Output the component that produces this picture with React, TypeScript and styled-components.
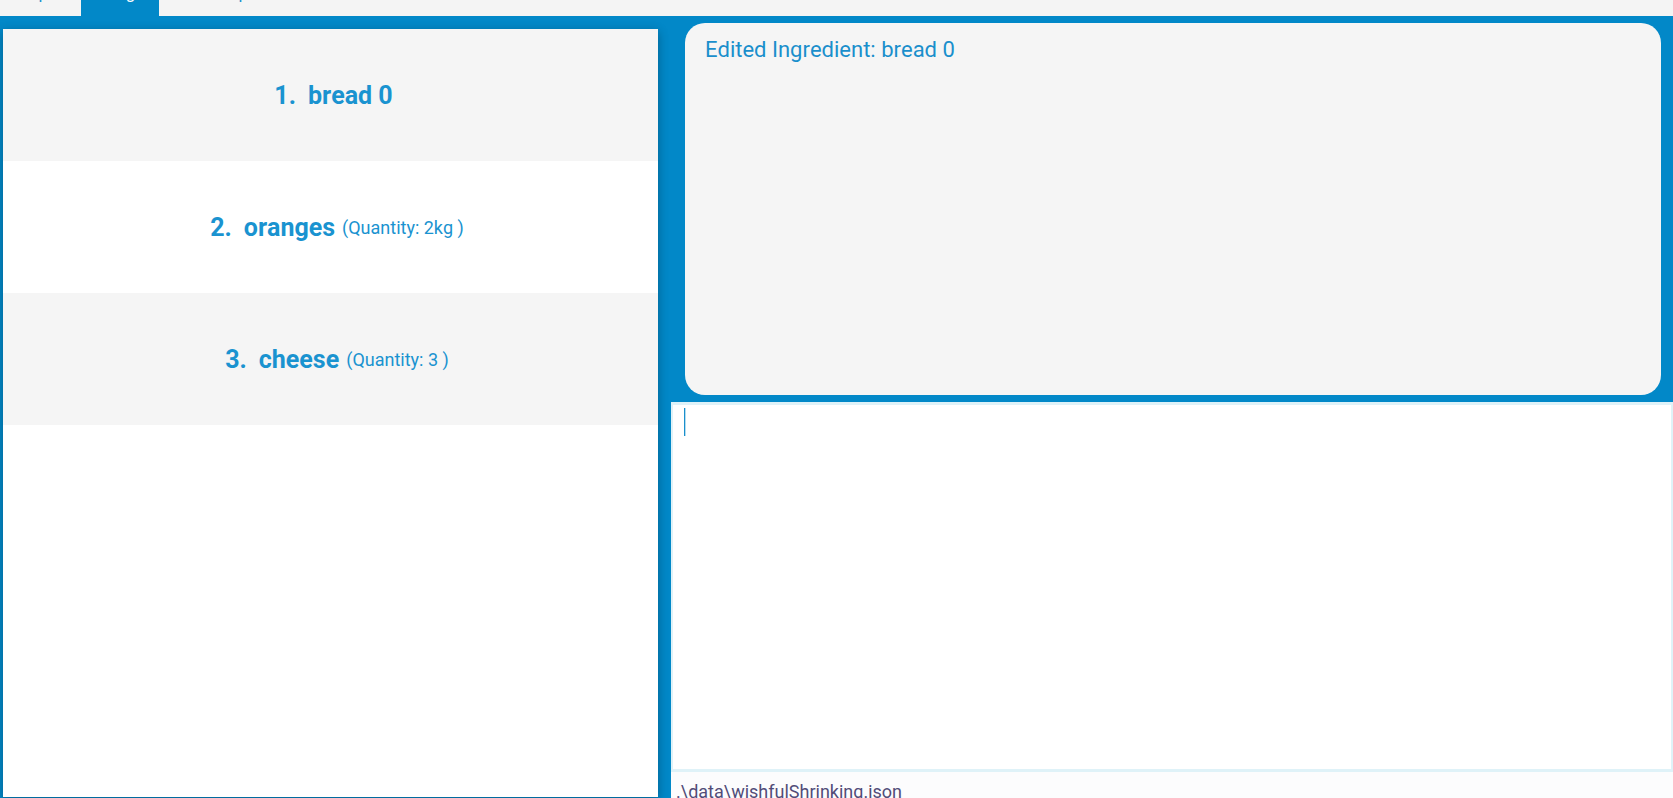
import React from "react";
import styled, { createGlobalStyle } from "styled-components";

const GlobalStyle = createGlobalStyle`
  * { box-sizing: border-box; }
  body {
    margin: 0;
    font-family: Roboto, "Liberation Sans", sans-serif;
    font-kerning: none;
    background: #0288c8;
  }
`;

const Window = styled.div`
  height: 100vh;
  display: flex;
  flex-direction: column;
  overflow: hidden;
  background: #0288c8;
`;

const TabBar = styled.nav`
  flex: none;
  display: flex;
  height: 16px;
  overflow: hidden;
  background: #f4f4f4;
`;

const Tab = styled.button<{ $active?: boolean }>`
  display: flex;
  align-items: flex-end;
  height: 16px;
  padding: 0 15px 13px 16px;
  border: 0;
  font: 17px/20px Roboto, "Liberation Sans", sans-serif;
  color: ${(p) => (p.$active ? "#ffffff" : "#1e90cc")};
  background: ${(p) => (p.$active ? "#0288c8" : "transparent")};

  &:first-child {
    padding: 0 24px 13px 6px;
  }
`;

const Columns = styled.main`
  flex: 1;
  min-height: 0;
  display: grid;
  grid-template-columns: 671fr 1002fr;
`;

const ListPane = styled.section`
  display: flex;
  min-height: 0;
  padding: 13px 13px 1px 3px;
`;

const IngredientList = styled.ol`
  flex: 1;
  margin: 0;
  padding: 0;
  list-style: none;
  background: #ffffff;
  box-shadow: 0 3px 10px rgba(0, 0, 0, 0.3);
`;

const IngredientRow = styled.li`
  display: flex;
  align-items: center;
  justify-content: center;
  height: 132px;
  padding-left: 13px;
  font-size: 25px;
  font-weight: 700;
  color: #1a93d0;

  &:nth-child(odd) {
    background: #f5f5f5;
  }
`;

const Name = styled.span`
  margin-left: 12px;
`;

const Quantity = styled.span`
  margin-left: 7px;
  font-size: 18px;
  font-weight: 400;
`;

const DetailPane = styled.section`
  display: grid;
  grid-template-rows: minmax(0, 386fr) minmax(0, 370fr) 26px;
  min-width: 0;
  min-height: 0;
`;

const Result = styled.output`
  margin: 7px 12px 7px 14px;
  padding: 13px 20px;
  border-radius: 20px;
  background: #f5f5f5;
  color: #1a8fcc;
  font-size: 22px;
  line-height: 28px;
`;

const Editor = styled.div`
  position: relative;
  display: flex;
`;

const CommandInput = styled.textarea`
  flex: 1;
  padding: 2px 11px;
  resize: none;
  outline: none;
  border: 2px solid #dff2f8;
  border-width: 3px 2px;
  background: #ffffff;
  color: #1a8fcc;
  caret-color: transparent;
  font: 22px/28px Roboto, "Liberation Sans", sans-serif;
`;

const Caret = styled.span`
  position: absolute;
  top: 6px;
  left: 13px;
  width: 2px;
  height: 28px;
  background: #1a8fcc;
  border-right: 1px solid #b4dcef;
`;

const StatusBar = styled.footer`
  padding: 8px 5px 0;
  overflow: hidden;
  background: #fcfcfd;
  color: #524c78;
  font-size: 18px;
  line-height: 24px;
`;

const ingredients = [
  { name: "bread 0" },
  { name: "oranges", quantity: "2kg" },
  { name: "cheese", quantity: "3" },
];

export default function App() {
  return (
    <Window>
      <GlobalStyle />
      <TabBar aria-label="Sections">
        <Tab type="button">Recipe</Tab>
        <Tab type="button" $active aria-current="page">
          Fridge
        </Tab>
        <Tab type="button">Consumption</Tab>
      </TabBar>
      <Columns>
        <ListPane>
          <IngredientList>
            {ingredients.map((item, i) => (
              <IngredientRow key={item.name}>
                <span>{i + 1}.</span>
                <Name>{item.name}</Name>
                <Quantity>{item.quantity && `(Quantity: ${item.quantity} )`}</Quantity>
              </IngredientRow>
            ))}
          </IngredientList>
        </ListPane>
        <DetailPane>
          <Result>Edited Ingredient: bread 0</Result>
          <Editor>
            <CommandInput aria-label="Command" spellCheck={false} />
            <Caret aria-hidden="true" />
          </Editor>
          <StatusBar>.\data\wishfulShrinking.json</StatusBar>
        </DetailPane>
      </Columns>
    </Window>
  );
}
